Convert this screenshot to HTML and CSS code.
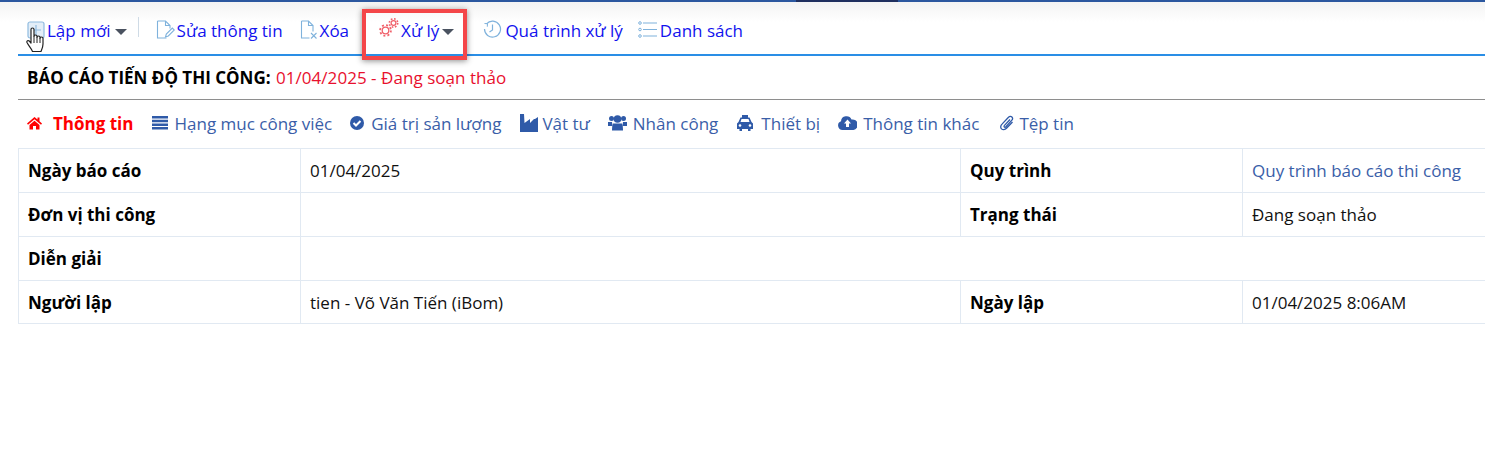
FILE: index.html
```html
<!DOCTYPE html>
<html lang="vi">
<head>
    <meta charset="UTF-8">
    <meta name="viewport" content="width=device-width, initial-scale=1.0">
    <title>Báo cáo tiến độ thi công</title>
    <link rel="stylesheet" href="styles.css">
</head>
<body>
    <div class="top-strip">
        <span class="strip-dark"></span>
    </div>

    <div class="page">
        <!-- Thanh công cụ -->
        <div class="toolbar">
            <a class="tool tool-new">
                <svg class="ico" width="18" height="20" viewBox="0 0 18 20"><rect x="1" y="2" width="16" height="16" rx="2" fill="#e3eef8" stroke="#8fbbdf" stroke-width="1.2"/><path d="M9 5v10M4 10h10" stroke="#8fbbdf" stroke-width="1.2"/></svg>
                <span>Lập mới</span><i class="caret"></i>
            </a>
            <span class="divider"></span>
            <a class="tool tool-edit">
                <svg class="ico" width="19" height="20" viewBox="0 0 19 20"><path d="M1.5 1h8l4.5 4.500v3M1.500 1v17h9M9.500 1v4.500h4.500" fill="none" stroke="#7fb2dc" stroke-width="1.100"/><path d="M9.500 17l.8-3 6-6 2 2-6 6z" fill="none" stroke="#7fb2dc" stroke-width="1.100"/></svg>
                <span>Sửa thông tin</span>
            </a>
            <a class="tool tool-del">
                <svg class="ico" width="18" height="20" viewBox="0 0 18 20"><path d="M1.500 1h7l4.500 4.500v6M1.500 1v17h8M8.500 1v4.500h4.500" fill="none" stroke="#7fb2dc" stroke-width="1.100"/><path d="M11 13l5.500 5.500M16.500 13L11 18.500" stroke="#7fb2dc" stroke-width="1.100"/></svg>
                <span>Xóa</span>
            </a>
            <a class="tool tool-process">
                <svg class="ico" width="20" height="24" viewBox="0 0 20 24"><g fill="none" stroke="#f0606a"><circle cx="6.500" cy="12.500" r="3.300" stroke-width="1.300"/><circle cx="6.500" cy="12.500" r="5.400" stroke-width="1.800" stroke-dasharray="2 2.240"/><circle cx="14.500" cy="5" r="2.400" stroke-width="1.200"/><circle cx="14.500" cy="5" r="4.200" stroke-width="1.600" stroke-dasharray="1.700 1.600"/></g></svg>
                <span>Xử lý</span><i class="caret"></i>
            </a>
            <a class="tool tool-history">
                <svg class="ico" width="19" height="20" viewBox="0 0 19 20"><path d="M3.500 3.800A8 8 0 1 1 1.500 9" fill="none" stroke="#7fb2dc" stroke-width="1.200"/><path d="M1.500 3.500l3 .2-.2 3" fill="none" stroke="#7fb2dc"/><path d="M9.500 4.500v5.500l-3 2" fill="none" stroke="#7fb2dc" stroke-width="1.200"/></svg>
                <span>Quá trình xử lý</span>
            </a>
            <a class="tool tool-list">
                <svg class="ico" width="19" height="20" viewBox="0 0 19 20"><g fill="none" stroke="#7fb2dc"><circle cx="2" cy="3" r="1.300"/><circle cx="2" cy="9.500" r="1.300"/><circle cx="2" cy="16" r="1.300"/><path d="M5 3h14M5 9.500h14M5 16h14" stroke-width="1.200"/></g></svg>
                <span>Danh sách</span>
            </a>
        </div>

        <div class="title-bar">
            <b>BÁO CÁO TIẾN ĐỘ THI CÔNG:</b> <span class="title-status">01/04/2025 - Đang soạn thảo</span>
        </div>

        <!-- Các tab -->
        <div class="tabs">
            <a class="tab tab-active">
                <svg class="tab-ico" width="15" height="14" viewBox="0 0 15 14"><path d="M7.500 1L0 7.500l1 1.200 6.500-5.500 6.500 5.500 1-1.200-2.500-2.200V1.500h-2v2z" fill="#f00"/><path d="M2.500 9l5-4.200 5 4.200v4.500H9V10H6v3.500H2.500z" fill="#f00"/></svg>
                <span>Thông tin</span>
            </a>
            <a class="tab tab-items">
                <svg class="tab-ico" width="16" height="14" viewBox="0 0 16 14"><path d="M0 0h16v2.500H0zM0 3.700h16v2.500H0zM0 7.400h16v2.500H0zM0 11.100h16v2.500H0z" fill="#2f5aa8"/></svg>
                <span>Hạng mục công việc</span>
            </a>
            <a class="tab tab-value">
                <svg class="tab-ico" width="14" height="14" viewBox="0 0 14 14"><circle cx="7" cy="7" r="7" fill="#2f5aa8"/><path d="M3.500 7l2.500 2.500 4.500-4.500" fill="none" stroke="#fff" stroke-width="2"/></svg>
                <span>Giá trị sản lượng</span>
            </a>
            <a class="tab tab-material">
                <svg class="tab-ico" width="18" height="18" viewBox="0 0 18 18"><path d="M0 0h4l.5 9L10 5v4l4-4 1 0 3-2v15H0z" fill="#2f5aa8"/></svg>
                <span>Vật tư</span>
            </a>
            <a class="tab tab-labor">
                <svg class="tab-ico" width="19" height="16" viewBox="0 0 19 16"><g fill="#2f5aa8"><circle cx="3.500" cy="3.500" r="2.500"/><circle cx="15.500" cy="3.500" r="2.500"/><circle cx="9.500" cy="4" r="3.800"/><path d="M0 7h4L4.500 11H0zM15 7h4V11h-4.500z"/><path d="M5 8.500h9c.8 2 1 4.500 1 7H4c0-2.500.2-5 1-7z"/></g></svg>
                <span>Nhân công</span>
            </a>
            <a class="tab tab-device">
                <svg class="tab-ico" width="18" height="16" viewBox="0 0 18 16"><path d="M6 0h6v2.500h1.500L15.500 7l1.500 1.500V14h-2.500v2h-2.500v-2H6v2H3.500v-2H1V8.500L2.500 7l2-4.500H6zM5.500 4L4.500 7h9l-1-3z" fill="#2f5aa8" fill-rule="evenodd"/><circle cx="4" cy="10.500" r="1.300" fill="#fff"/><circle cx="14" cy="10.500" r="1.300" fill="#fff"/></svg>
                <span>Thiết bị</span>
            </a>
            <a class="tab tab-other">
                <svg class="tab-ico" width="19" height="14" viewBox="0 0 19 14"><path d="M4.500 14A4.500 4.500 0 0 1 3 5.300 5.500 5.500 0 0 1 13.500 3.500 4 4 0 0 1 15.500 14z" fill="#2f5aa8"/><path d="M9.500 3.500L13 7.500h-2V11H8V7.500H6z" fill="#fff"/></svg>
                <span>Thông tin khác</span>
            </a>
            <a class="tab tab-file">
                <svg class="tab-ico" width="14" height="16" viewBox="0 0 14 16"><path d="M12.500 7l-6 6.300c-1.600 1.700-3.800 1.800-5 .6-1.200-1.200-1-3.300.5-4.800l6.500-6.800c1-1.100 2.500-1.200 3.400-.3.900.9.800 2.300-.2 3.400L5.900 11.800c-.5.500-1.200.6-1.600.2-.4-.4-.3-1.100.2-1.600L10 4.500" fill="none" stroke="#2f5aa8" stroke-width="1.300"/></svg>
                <span>Tệp tin</span>
            </a>
        </div>

        <!-- Bảng thông tin -->
        <table class="info-table">
            <colgroup>
                <col class="col-label"><col class="col-value"><col class="col-label2"><col class="col-value2">
            </colgroup>
            <tr>
                <th>Ngày báo cáo</th>
                <td>01/04/2025</td>
                <th>Quy trình</th>
                <td class="link-cell">Quy trình báo cáo thi công</td>
            </tr>
            <tr>
                <th>Đơn vị thi công</th>
                <td></td>
                <th>Trạng thái</th>
                <td>Đang soạn thảo</td>
            </tr>
            <tr>
                <th>Diễn giải</th>
                <td colspan="3"></td>
            </tr>
            <tr class="last-row">
                <th>Người lập</th>
                <td>tien - Võ Văn Tiến (iBom)</td>
                <th>Ngày lập</th>
                <td>01/04/2025 8:06AM</td>
            </tr>
        </table>
    </div>

    <!-- Khung đánh dấu và con trỏ chuột -->
    <div class="highlight-box"></div>
    <svg class="hand-cursor" width="19" height="26" viewBox="0 0 19 26"><path d="M5 2.500a1.500 1.500 0 0 1 3 0V9.500a1.500 1.500 0 0 1 3 0v1a1.500 1.500 0 0 1 3 0v1a1.500 1.500 0 0 1 3 0V17c0 3-1 5-2 7.500H6.500C5.500 21.500 3 19.500 1 15.500c-.6-1.500 1-2.600 2.300-1.500L5 16z" fill="#fff" stroke="#222" stroke-width="1.200" stroke-linejoin="round"/><path d="M8 9.500V16M11 10.500V16M14 11.500V16" fill="none" stroke="#222"/></svg>
</body>
</html>
```

FILE: styles.css
```css
html, body {
    margin: 0;
    padding: 0;
    height: 100%;
    overflow: hidden;
}

body {
    font-family: 'Open Sans', 'Noto Sans', sans-serif;
    font-size: 17px;
    color: #111;
    background-color: white;
    position: relative;
}

.top-strip {
    display: flex;
    height: 2px;
    padding-left: 796px;
    background-color: #2b579f;
}

.strip-dark {
    width: 102px;
    background-color: #1f2f5f;
}

.page {
    padding-left: 18px;
    background: linear-gradient(#f3f3f3, #fff) no-repeat 0 0 / 100% 20px;
}

.toolbar {
    display: flex;
    align-items: center;
    padding: 4px 0 0 9px;
    box-sizing: border-box;
    height: 54px;
    border-bottom: 2px solid #2a8ee6;
}

.tool {
    display: flex;
    align-items: center;
    color: #1212ee;
}

.tool .ico {
    margin-right: 2px;
}

.caret {
    width: 0;
    height: 0;
    border-left: 6px solid transparent;
    border-right: 6px solid transparent;
    border-top: 6px solid #4a5260;
    margin: 4px 0 0 4px;
}

.divider {
    width: 1px;
    height: 20px;
    background-color: #cfdbe6;
    margin: -6px 17px 0 11px;
}

.tool-del {
    margin-left: 17px;
}

.tool-process {
    margin-left: 30px;
}

.tool-process .caret {
    margin-left: 3px;
}

.tool-history {
    margin-left: 29px;
}

.tool-history .ico,
.tool-list .ico {
    margin-right: 3px;
}

.tool-list {
    margin-left: 15px;
}

.title-bar {
    height: 43px;
    line-height: 44px;
    padding-left: 9px;
    border-bottom: 1px solid #8e8e8e;
}

.title-bar b {
    color: #000;
}

.title-status {
    color: #e8102e;
    margin-left: 1px;
    letter-spacing: 0.04px;
}

.tabs {
    display: flex;
    align-items: center;
    height: 46px;
    padding: 0 0 2px 9px;
}

.tab {
    display: flex;
    align-items: center;
    color: #3a5ea8;
    margin-right: 17px;
}

.tab-ico {
    margin-right: 6px;
}

.tab-active {
    color: #f00;
    font-weight: bold;
    margin-right: 19px;
}

.tab-active .tab-ico {
    margin-right: 11px;
}

.tab-items {
    margin-right: 18px;
}

.tab-value .tab-ico,
.tab-device .tab-ico {
    margin-right: 7px;
}

.tab-value {
    margin-right: 19px;
}

.tab-material {
    margin-right: 18px;
}

.tab-material .tab-ico {
    margin-right: 4px;
}

.tab-labor {
    margin-right: 18px;
}

.tab-device {
    margin-right: 18px;
}

.tab-other {
    margin-right: 21px;
}

.tab-file .tab-ico {
    margin-right: 5px;
}

.info-table {
    border-collapse: collapse;
    table-layout: fixed;
    width: 1520px;
}

.info-table th,
.info-table td {
    border: 1px solid #e1e9f2;
    height: 44px;
    padding: 0 9px;
    text-align: left;
    box-sizing: border-box;
}

.info-table th {
    font-weight: bold;
    color: #000;
}

.info-table .last-row th,
.info-table .last-row td {
    height: 43px;
}

.col-label {
    width: 282px;
}

.col-value {
    width: 660px;
}

.col-label2 {
    width: 282px;
}

.info-table .link-cell {
    color: #3a5ea8;
}

.highlight-box {
    position: absolute;
    left: 362px;
    top: 9px;
    width: 97px;
    height: 43px;
    border: 4px solid #f44649;
    box-shadow: 0 1px 6px rgba(0,0,0,0.45);
}

.hand-cursor {
    position: absolute;
    left: 26px;
    top: 27px;
}
```
